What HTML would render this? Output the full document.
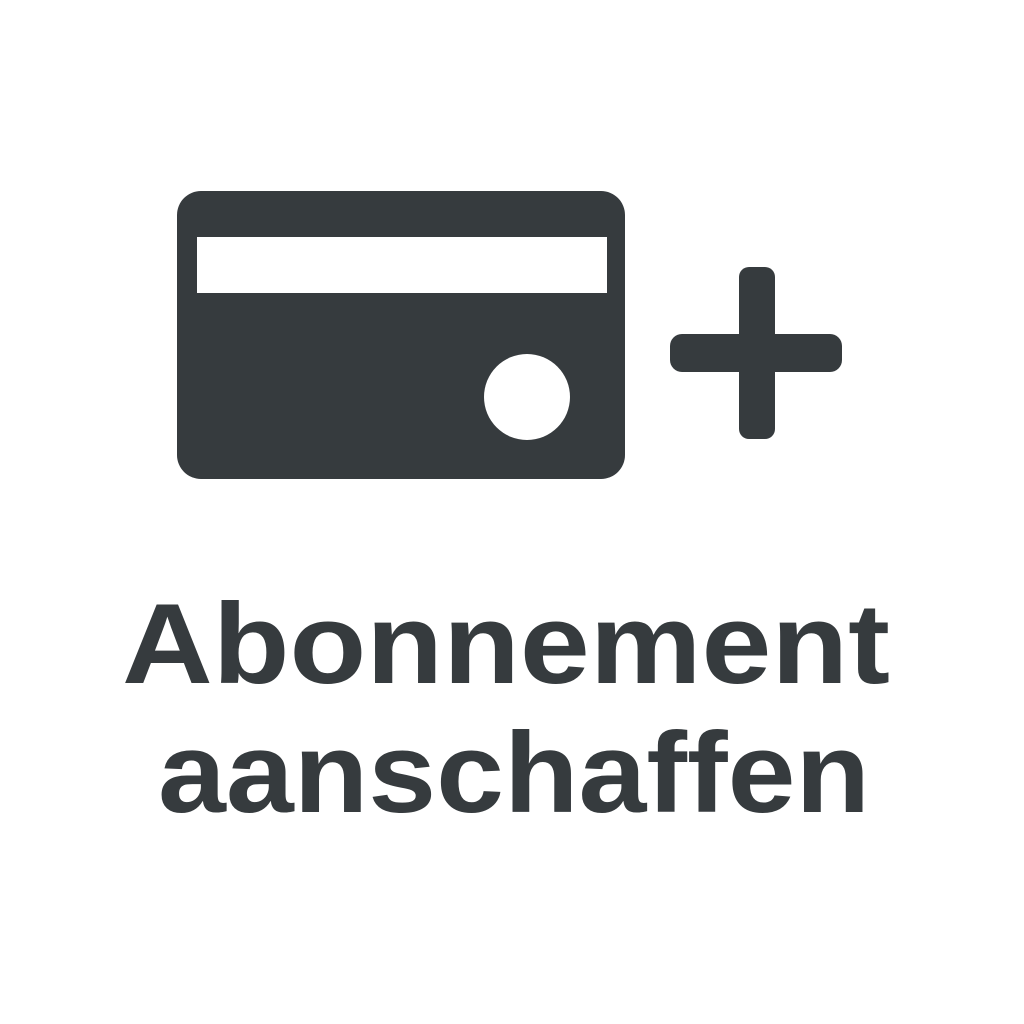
<!DOCTYPE html>
<html><head><style>html,body{margin:0;padding:0;background:#fff;width:1024px;height:1024px;overflow:hidden}</style></head>
<body>
<svg width="1024" height="1024" viewBox="0 0 1024 1024" xmlns="http://www.w3.org/2000/svg">
<rect width="1024" height="1024" fill="#fff"/>
<rect x="177" y="191" width="448" height="288" rx="24" fill="#363b3e"/>
<rect x="197" y="237" width="410" height="56" fill="#fff"/>
<circle cx="527" cy="397" r="43" fill="#fff"/>
<rect x="739" y="267" width="36" height="172" rx="10" fill="#363b3e"/>
<rect x="670" y="334" width="172" height="38" rx="12" fill="#363b3e"/>
<text x="122" y="683" font-family="Liberation Sans, sans-serif" font-weight="bold" font-size="114" fill="#363b3e" textLength="768" lengthAdjust="spacingAndGlyphs">Abonnement</text>
<text x="158" y="812" font-family="Liberation Sans, sans-serif" font-weight="bold" font-size="114" fill="#363b3e" textLength="712" lengthAdjust="spacingAndGlyphs">aanschaffen</text>
</svg>
</body></html>
